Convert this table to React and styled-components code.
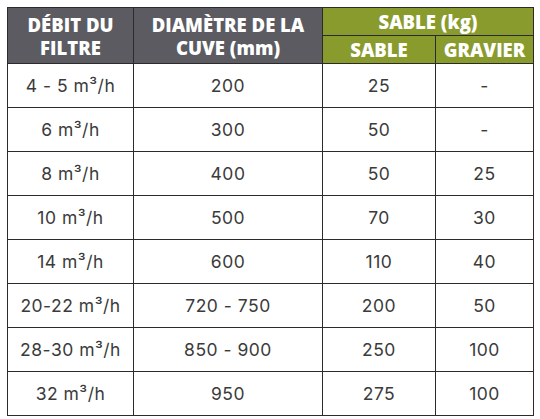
import React from 'react';
import styled, { createGlobalStyle } from 'styled-components';

const GlobalStyle = createGlobalStyle`
  body {
    margin: 0;
    padding: 7px;
    background: #fff;
    font-family: Inter, "Open Sans", "Liberation Sans", sans-serif;
  }
`;

const rows = [
  ['4 - 5 m³/h', '200', '25', '-'],
  ['6 m³/h', '300', '50', '-'],
  ['8 m³/h', '400', '50', '25'],
  ['10 m³/h', '500', '70', '30'],
  ['14 m³/h', '600', '110', '40'],
  ['20-22 m³/h', '720 - 750', '200', '50'],
  ['28-30 m³/h', '850 - 900', '250', '100'],
  ['32 m³/h', '950', '275', '100'],
];

const widths = [126, 189, 113, 98];

const Table = styled.table`
  width: 526px;
  border-collapse: collapse;
  table-layout: fixed;
  border: 1.5px solid #2b2b2b;
`;

const Col = styled.col`
  width: ${(p) => p.$w}px;
`;

const Head = styled.th`
  background: ${(p) => (p.$green ? '#8a9b2d' : '#5b5b61')};
  color: #fff;
  font-family: "Open Sans", Inter, sans-serif;
  font-weight: 800;
  font-size: 18.5px;
  line-height: 23px;
  text-align: center;
  padding: 0;
  height: ${(p) => p.$h || 54}px;
  border: 1.5px solid #2b2b2b;
`;

const Cell = styled.td`
  text-align: center;
  color: #3b3b3b;
  font-size: 17.5px;
  font-weight: 400;
  letter-spacing: 0.5px;
  height: 43px;
  padding: 0;
  border: 1.5px solid #2b2b2b;
`;

export default function App() {
  return (
    <>
      <GlobalStyle />
      <Table>
        <colgroup>
          {widths.map((w, i) => (
            <Col key={i} $w={w} />
          ))}
        </colgroup>
        <thead>
          <tr>
            <Head rowSpan={2}>DÉBIT DU<br />FILTRE</Head>
            <Head rowSpan={2}>DIAMÈTRE DE LA<br />CUVE (mm)</Head>
            <Head colSpan={2} $green $h={27}>SABLE (kg)</Head>
          </tr>
          <tr>
            <Head $green $h={27}>SABLE</Head>
            <Head $green $h={27}>GRAVIER</Head>
          </tr>
        </thead>
        <tbody>
          {rows.map((r, i) => (
            <tr key={i}>
              {r.map((c, j) => (
                <Cell key={j}>{c}</Cell>
              ))}
            </tr>
          ))}
        </tbody>
      </Table>
    </>
  );
}
